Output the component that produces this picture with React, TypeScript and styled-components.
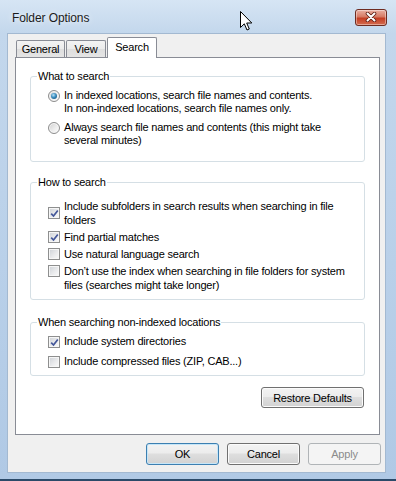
import styled, { createGlobalStyle } from 'styled-components'

const GlobalStyle = createGlobalStyle`
  html, body {
    margin: 0;
    padding: 0;
    background: #ffffff;
  }
  body {
    font-family: "Liberation Sans", Arial, sans-serif;
  }
`

const Window = styled.div`
  position: relative;
  box-sizing: border-box;
  width: 396px;
  height: 481px;
  display: flex;
  flex-direction: column;
  background: linear-gradient(180deg, #d6e5f4 0%, #c3d7ec 7%, #b9d0e9 55%, #b0c9e5 100%);
  border-bottom: 2px solid #2b4a69;
  overflow: hidden;
`

const TitleBar = styled.div`
  flex: none;
  height: 34px;
  display: flex;
  align-items: center;
  justify-content: space-between;
  padding: 0 9px 0 12px;
`

const Title = styled.span`
  font-size: 12px;
  letter-spacing: -0.1px;
  color: #1b1b1b;
  text-shadow: 0 0 6px rgba(255, 255, 255, 0.9);
  margin-top: 2px;
`

const CloseButton = styled.div`
  box-sizing: border-box;
  width: 32px;
  height: 17px;
  border: 1px solid #6e2c21;
  border-radius: 3px;
  background: linear-gradient(180deg, #eab0a3 0%, #d67a64 45%, #c43e24 55%, #d36c50 100%);
  box-shadow: inset 0 0 0 1px rgba(255, 255, 255, 0.4);
  display: flex;
  align-items: center;
  justify-content: center;
`

const Client = styled.div`
  flex: 1;
  margin: 0 11px 0 8px;
  padding: 3px 5px 0 7px;
  background: #f0f0f0;
  box-shadow: 0 0 0 1px #a3b9d1;
  display: flex;
  flex-direction: column;
`

const BottomFrame = styled.div`
  flex: none;
  height: 7px;
`

const TabStrip = styled.div`
  display: flex;
  align-items: flex-end;
  padding-left: 1px;
`

const Tab = styled.div<{ $active?: boolean; $width: number }>`
  box-sizing: border-box;
  position: relative;
  width: ${p => p.$width}px;
  height: ${p => (p.$active ? 21 : 17)}px;
  margin-bottom: ${p => (p.$active ? -1 : 0)}px;
  margin-right: ${p => (p.$active ? 0 : 1)}px;
  z-index: ${p => (p.$active ? 1 : 0)};
  border: 1px solid #898c95;
  border-bottom: none;
  border-radius: 2px 2px 0 0;
  background: ${p => (p.$active ? '#ffffff' : 'linear-gradient(180deg, #f3f3f3 0%, #ebebeb 50%, #dedede 51%, #e5e5e5 100%)')};
  font-size: 11px;
  letter-spacing: -0.2px;
  color: #000;
  display: flex;
  justify-content: center;
  padding-top: ${p => (p.$active ? 3 : 2)}px;
`

const Panel = styled.div`
  box-sizing: border-box;
  height: 378px;
  border: 1px solid #898c95;
  background: #ffffff;
  padding: 11px 14px 0 14px;
  display: flex;
  flex-direction: column;
`

const Group = styled.fieldset<{ $top: number; $padBottom: number }>`
  margin: ${p => p.$top}px 0 0 0;
  padding: 0 10px ${p => p.$padBottom}px 6px;
  border: 1px solid #d5dfe5;
  border-radius: 3px;
  min-width: 0;
`

const Legend = styled.legend`
  padding: 0 1px;
  font-size: 11px;
  line-height: 14px;
  letter-spacing: -0.2px;
  color: #000;
`

const OptionList = styled.div<{ $padTop: number; $gap: number }>`
  display: flex;
  flex-direction: column;
  gap: ${p => p.$gap}px;
  padding: ${p => p.$padTop}px 0 0 11px;
`

const Option = styled.label<{ $center?: boolean; $lineHeight?: number }>`
  display: flex;
  align-items: ${p => (p.$center ? 'center' : 'flex-start')};
  gap: 4px;
  font-size: 11px;
  line-height: ${p => p.$lineHeight ?? 13}px;
  letter-spacing: -0.2px;
  color: #000;
  white-space: nowrap;
`

const Radio = styled.span<{ $checked?: boolean }>`
  flex: none;
  box-sizing: border-box;
  width: 12px;
  height: 12px;
  margin-top: 1px;
  border-radius: 50%;
  border: 1px solid #8d8d8d;
  background: linear-gradient(135deg, #cfcfcf 0%, #ececec 55%, #ffffff 100%);
  box-shadow: inset 0 0 0 1px #f7f7f7;
  display: flex;
  align-items: center;
  justify-content: center;

  &::after {
    content: '';
    display: ${p => (p.$checked ? 'block' : 'none')};
    width: 6px;
    height: 6px;
    border-radius: 50%;
    background: radial-gradient(circle at 40% 35%, #b9e3f7 0%, #3a8cbf 45%, #0d4369 100%);
  }
`

const Check = styled.span<{ $center?: boolean }>`
  flex: none;
  box-sizing: border-box;
  width: 12px;
  height: 12px;
  margin-top: ${p => (p.$center ? 0 : 1)}px;
  border: 1px solid #8e8f8f;
  background: linear-gradient(135deg, #cdd1d6 0%, #e9eaec 55%, #fbfbfb 100%);
  box-shadow: inset 0 0 0 1px #f6f6f6;
  display: flex;
  align-items: center;
  justify-content: center;
`

const RestoreRow = styled.div`
  display: flex;
  justify-content: flex-end;
  margin-top: 11px;
  padding-right: 1px;
`

const ButtonRow = styled.div`
  display: flex;
  justify-content: flex-end;
  gap: 8px;
  margin-top: 8px;
  margin-right: -1px;
`

const Button = styled.button<{ $variant?: 'default' | 'disabled'; $width?: number; $height?: number }>`
  box-sizing: border-box;
  width: ${p => p.$width ?? 73}px;
  height: ${p => p.$height ?? 22}px;
  padding: 0;
  border-radius: 3px;
  font-family: inherit;
  font-size: 11px;
  letter-spacing: -0.2px;
  color: ${p => (p.$variant === 'disabled' ? '#8b8b8b' : '#000')};
  border: 1px solid ${p => (p.$variant === 'default' ? '#3c7fb1' : p.$variant === 'disabled' ? '#b0b4b7' : '#707070')};
  background: ${p =>
    p.$variant === 'disabled'
      ? '#f4f4f4'
      : 'linear-gradient(180deg, #f3f3f3 0%, #ececec 45%, #dedede 50%, #d2d2d2 100%)'};
  box-shadow: inset 0 0 0 1px ${p => (p.$variant === 'default' ? '#c6e6f8' : p.$variant === 'disabled' ? '#f4f4f4' : '#fbfbfb')};
`

const Cursor = styled.svg`
  position: absolute;
  left: 240px;
  top: 11px;
`

function CheckMark() {
  return (
    <svg width="9" height="9" viewBox="0 0 9 9">
      <path d="M1.2 4.6 L3.5 7 L7.8 1.4" fill="none" stroke="#44579a" strokeWidth="1.7" />
    </svg>
  )
}

function CheckBox({ checked, center }: { checked?: boolean; center?: boolean }) {
  return <Check $center={center}>{checked && <CheckMark />}</Check>
}

export default function App() {
  return (
    <>
      <GlobalStyle />
      <Window>
        <TitleBar>
          <Title>Folder Options</Title>
          <CloseButton>
            <svg width="12" height="10" viewBox="0 0 12 10">
              <path d="M2.5 1.5 L9.5 8.5 M9.5 1.5 L2.5 8.5" stroke="#5d1c12" strokeWidth="3.6" strokeLinecap="round" />
              <path d="M2.5 1.5 L9.5 8.5 M9.5 1.5 L2.5 8.5" stroke="#ffffff" strokeWidth="2" strokeLinecap="round" />
            </svg>
          </CloseButton>
        </TitleBar>
        <Client>
          <TabStrip>
            <Tab $width={49}>General</Tab>
            <Tab $width={40}>View</Tab>
            <Tab $width={50} $active>Search</Tab>
          </TabStrip>
          <Panel>
            <Group $top={0} $padBottom={14}>
              <Legend>What to search</Legend>
              <OptionList $padTop={6} $gap={6}>
                <Option>
                  <Radio $checked />
                  <span>
                    In indexed locations, search file names and contents.
                    <br />
                    In non-indexed locations, search file names only.
                  </span>
                </Option>
                <Option>
                  <Radio />
                  <span>
                    Always search file names and contents (this might take
                    <br />
                    several minutes)
                  </span>
                </Option>
              </OptionList>
            </Group>
            <Group $top={13} $padBottom={7}>
              <Legend>How to search</Legend>
              <OptionList $padTop={10} $gap={3}>
                <Option $center $lineHeight={14}>
                  <CheckBox checked center />
                  <span>
                    Include subfolders in search results when searching in file
                    <br />
                    folders
                  </span>
                </Option>
                <Option $lineHeight={14}>
                  <CheckBox checked />
                  <span>Find partial matches</span>
                </Option>
                <Option $lineHeight={14}>
                  <CheckBox />
                  <span>Use natural language search</span>
                </Option>
                <Option $lineHeight={14}>
                  <CheckBox />
                  <span>
                    Don’t use the index when searching in file folders for system
                    <br />
                    files (searches might take longer)
                  </span>
                </Option>
              </OptionList>
            </Group>
            <Group $top={15} $padBottom={7}>
              <Legend>When searching non-indexed locations</Legend>
              <OptionList $padTop={6} $gap={7}>
                <Option>
                  <CheckBox checked />
                  <span>Include system directories</span>
                </Option>
                <Option>
                  <CheckBox />
                  <span>Include compressed files (ZIP, CAB...)</span>
                </Option>
              </OptionList>
            </Group>
            <RestoreRow>
              <Button $width={103} $height={21}>Restore Defaults</Button>
            </RestoreRow>
          </Panel>
          <ButtonRow>
            <Button $variant="default">OK</Button>
            <Button>Cancel</Button>
            <Button $variant="disabled">Apply</Button>
          </ButtonRow>
        </Client>
        <BottomFrame />
        <Cursor width="13" height="20" viewBox="0 0 13 20">
          <path d="M0.5 0.5 L0.5 16.5 L4.3 12.8 L7 19 L9.3 18 L6.7 12 L11.8 12 Z" fill="#ffffff" stroke="#000000" strokeWidth="1" strokeLinejoin="miter" />
        </Cursor>
      </Window>
    </>
  )
}
